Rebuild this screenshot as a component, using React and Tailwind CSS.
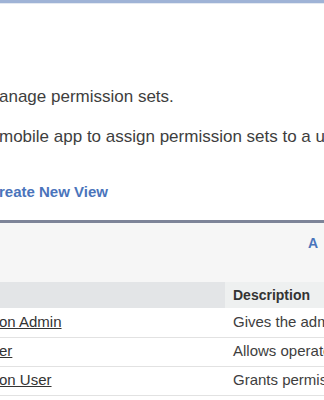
const rows = [
  { name: 'on Admin', desc: 'Gives the administrator access' },
  { name: 'er', desc: 'Allows operators to manage' },
  { name: 'on User', desc: 'Grants permissions to users' },
];

export default function App() {
  return (
    <div className="w-[324px] h-[400px] overflow-hidden bg-white text-[#333]" style={{ fontFamily: "'Liberation Sans', Arial, sans-serif" }}>
      <div className="h-[3px] bg-[#9fb3d6]" />
      <div className="h-px bg-[#e4e9f1]" />

      <div className="pt-[84px] text-[17px] leading-[18px] text-[#3e3e3e]">
        <p className="whitespace-nowrap -ml-px">anage permission sets.</p>
        <p className="mt-[22px] whitespace-nowrap -ml-px">mobile app to assign permission sets to a user</p>
        <p className="mt-[37px] whitespace-nowrap -ml-px text-[15px] font-bold text-[#4a74bb]">reate New View</p>
      </div>

      <div className="mt-[19px] h-[3px] bg-[#7d8498]" />
      <div className="h-[59px] bg-[#f6f6f6] flex justify-end pr-[6px] pt-[10px]">
        <span className="text-[14px] font-bold text-[#4a74bb]">A</span>
      </div>

      <table className="w-[324px] table-fixed border-collapse text-[15px]">
        <colgroup>
          <col className="w-[225px]" />
          <col className="w-[99px]" />
        </colgroup>
        <thead>
          <tr className="h-[26px]">
            <th className="bg-[#e3e5e7] p-0" />
            <th className="bg-[#eef0f0] text-left pl-[8px] text-[14px] font-bold text-[#333] whitespace-nowrap overflow-hidden">Description</th>
          </tr>
        </thead>
        <tbody>
          {rows.map((r) => (
            <tr key={r.name} className="h-[29px] border-b border-[#e2e2e2]">
              <td className="p-0 overflow-hidden">
                <a href="#" className="underline text-[#333] -ml-px whitespace-nowrap">{r.name}</a>
              </td>
              <td className="pl-[8px] whitespace-nowrap overflow-hidden text-[#3e3e3e]">{r.desc}</td>
            </tr>
          ))}
        </tbody>
      </table>
    </div>
  );
}
